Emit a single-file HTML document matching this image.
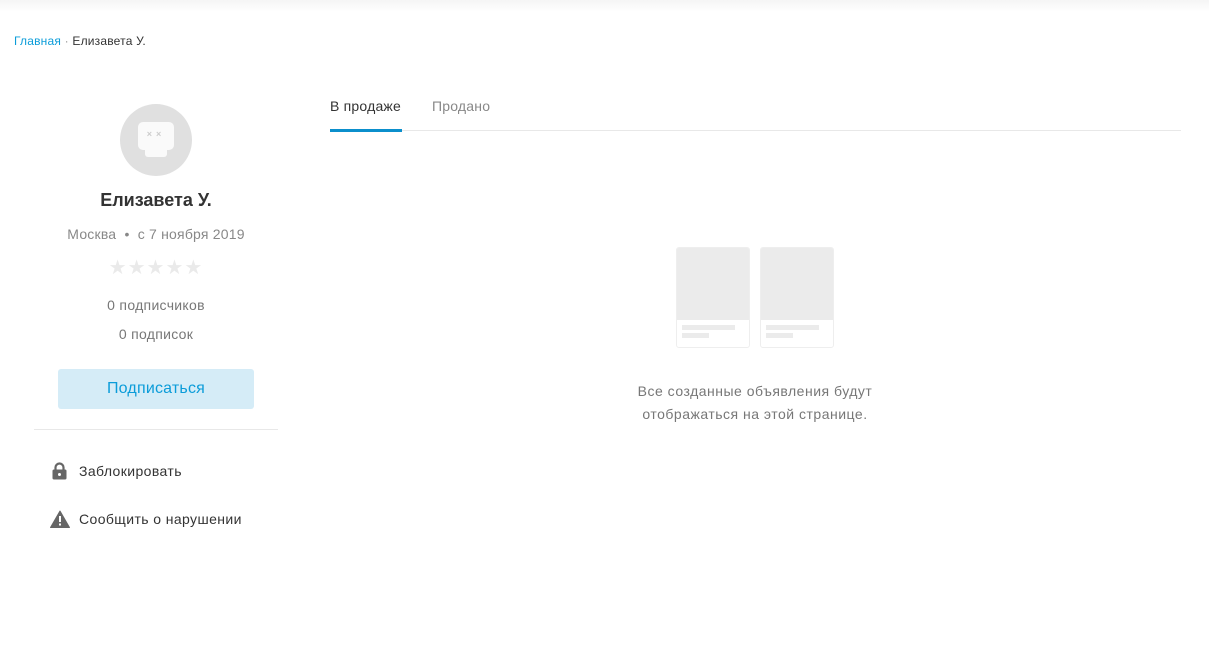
<!DOCTYPE html>
<html><head><meta charset="utf-8"><style>
*{margin:0;padding:0;box-sizing:border-box}
body{width:1209px;height:646px;background:#fff;font-family:"Liberation Sans","DejaVu Sans",sans-serif;position:relative;overflow:hidden;color:#333}
.a{position:absolute;white-space:nowrap}
.c{text-align:center}
</style></head><body>
<div class="a" style="left:0;top:0;width:1209px;height:12px;background:linear-gradient(#f5f5f5,#fff)"></div>
<div class="a" style="left:14px;top:34px;font-size:12px;color:#333;letter-spacing:0.2px"><span style="color:#0b9cd9">Главная</span> <span style="color:#999">·</span> Елизавета У.</div>
<div class="a" style="left:120px;top:104px;width:72px;height:72px;border-radius:50%;background:#e0e0e0"></div>
<div class="a" style="left:138px;top:122px;width:36px;height:28px;border-radius:5px;background:#fafafa"></div>
<div class="a" style="left:145px;top:148px;width:22px;height:9px;background:#fafafa;border-radius:0 0 3px 3px"></div>
<div class="a" style="left:141px;top:129px;width:30px;font-size:9px;line-height:10px;color:#ccc;font-weight:bold;text-align:center;letter-spacing:4px">××</div>
<div class="a c" style="left:34px;width:244px;top:190px;font-size:18px;font-weight:bold;color:#333">Елизавета У.</div>
<div class="a c" style="left:34px;width:244px;top:226px;font-size:14px;color:#888;letter-spacing:0.2px">Москва &nbsp;•&nbsp; с 7 ноября 2019</div>
<div class="a c" style="left:34px;width:244px;top:255px;font-size:20px;color:#eaeaea;letter-spacing:1px">★★★★★</div>
<div class="a c" style="left:34px;width:244px;top:297px;font-size:14px;color:#777;letter-spacing:0.3px">0 подписчиков</div>
<div class="a c" style="left:34px;width:244px;top:326px;font-size:14px;color:#777;letter-spacing:0.3px">0 подписок</div>
<div class="a c" style="left:58px;top:369px;width:196px;height:40px;line-height:40px;background:#d5ecf7;border-radius:3px;color:#0b9cd9;font-size:16px;letter-spacing:0.2px">Подписаться</div>
<div class="a" style="left:34px;top:429px;width:244px;height:1px;background:#e8e8e8"></div>
<svg class="a" style="left:52px;top:462px" width="15" height="18" viewBox="0 0 15 18"><path d="M3.5 8V5.5a4 4 0 0 1 8 0V8" fill="none" stroke="#666" stroke-width="2.2"/><rect x="0.5" y="7.5" width="14" height="10" rx="1.5" fill="#666"/><circle cx="7.5" cy="12.5" r="1.5" fill="#fff"/></svg>
<div class="a" style="left:79px;top:463px;font-size:14px;color:#333;letter-spacing:0.4px">Заблокировать</div>
<svg class="a" style="left:50px;top:510px" width="20" height="18" viewBox="0 0 20 18"><path d="M10 1L19.5 17.5H0.5Z" fill="#666" stroke="#666" stroke-linejoin="round"/><rect x="9" y="6" width="2" height="6" fill="#fff"/><rect x="9" y="13.5" width="2" height="2" fill="#fff"/></svg>
<div class="a" style="left:79px;top:511px;font-size:14px;color:#333;letter-spacing:0.4px">Сообщить о нарушении</div>
<div class="a" style="left:330px;top:98px;font-size:14px;color:#333;letter-spacing:0.2px">В продаже</div>
<div class="a" style="left:432px;top:98px;font-size:14px;color:#888;letter-spacing:0.2px">Продано</div>
<div class="a" style="left:330px;top:130px;width:851px;height:1px;background:#e8e8e8"></div>
<div class="a" style="left:330px;top:129px;width:72px;height:3px;background:#0b8fcc"></div>
<div class="a" style="left:676px;top:247px;width:74px;height:101px;border:1px solid #eee;border-radius:3px;background:#fff;overflow:hidden"><div style="height:72px;background:#ebebeb"></div><div style="margin:5px 0 0 5px;width:53px;height:5px;background:#ebebeb"></div><div style="margin:3px 0 0 5px;width:27px;height:5px;background:#ebebeb"></div></div>
<div class="a" style="left:760px;top:247px;width:74px;height:101px;border:1px solid #eee;border-radius:3px;background:#fff;overflow:hidden"><div style="height:72px;background:#ebebeb"></div><div style="margin:5px 0 0 5px;width:53px;height:5px;background:#ebebeb"></div><div style="margin:3px 0 0 5px;width:27px;height:5px;background:#ebebeb"></div></div>
<div class="a c" style="left:555px;width:400px;top:380px;font-size:14px;line-height:23px;color:#777;letter-spacing:0.5px">Все созданные объявления будут<br>отображаться на этой странице.</div>
</body></html>
